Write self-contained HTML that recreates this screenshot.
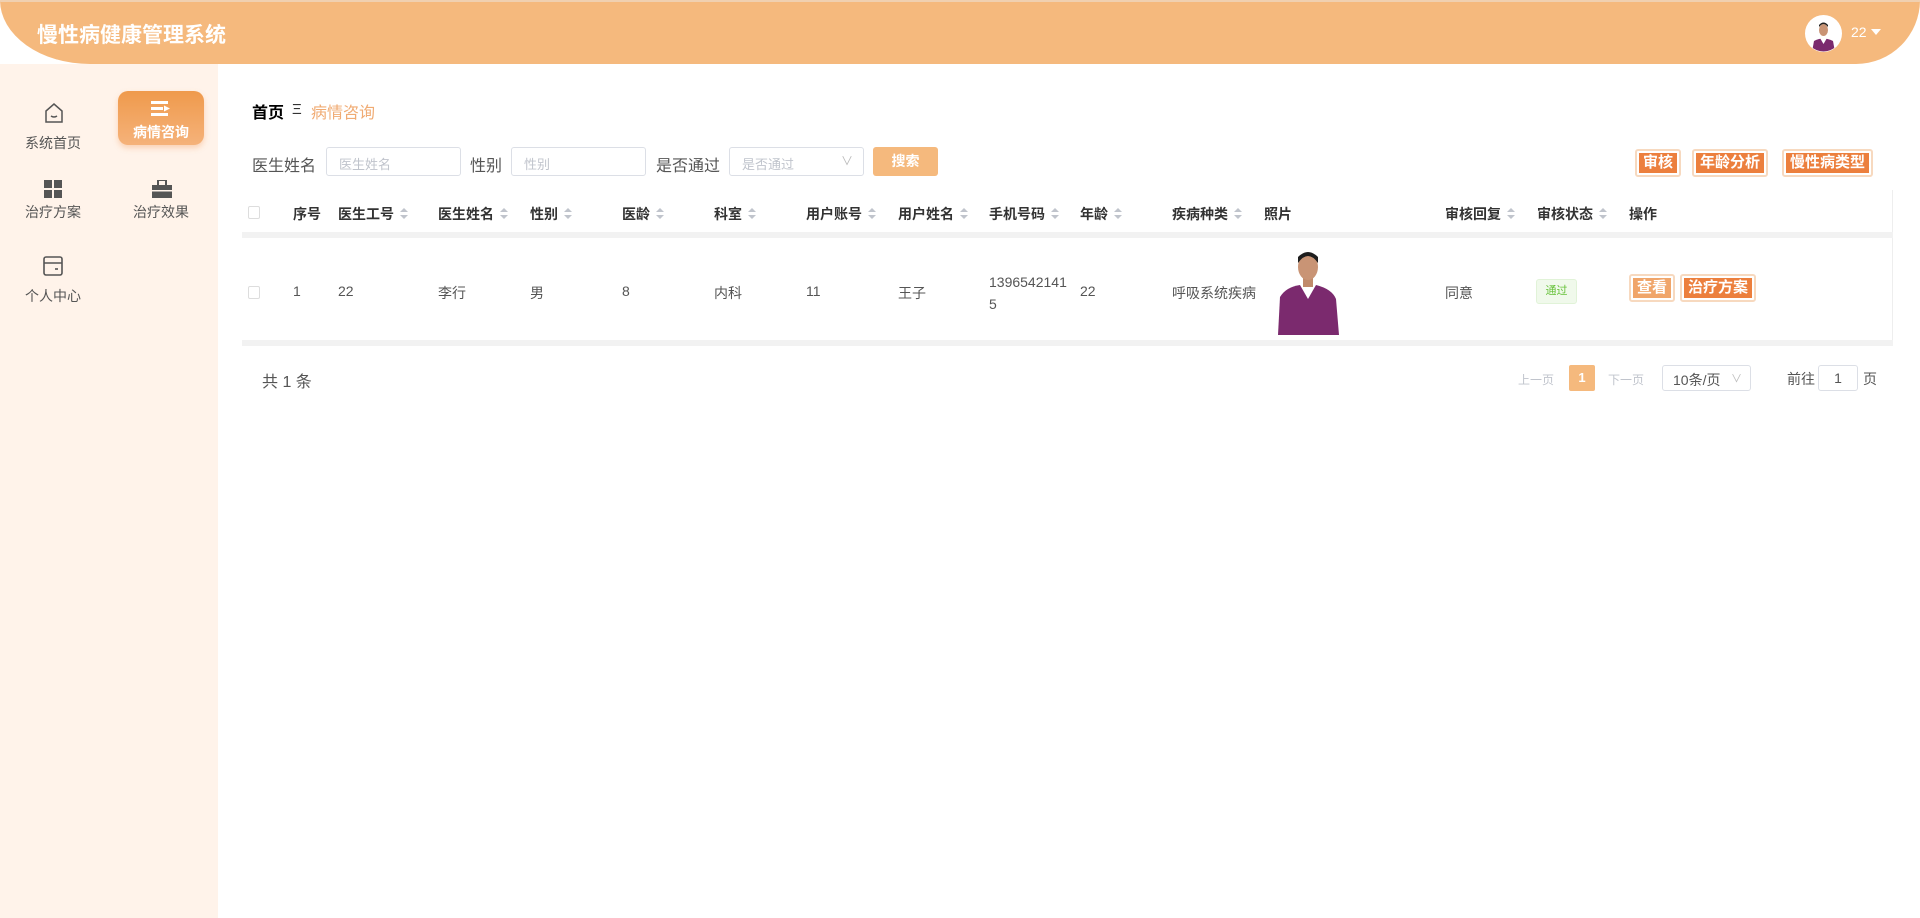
<!DOCTYPE html>
<html><head><meta charset="utf-8"><style>
*{margin:0;padding:0;box-sizing:border-box}
body{width:1920px;height:918px;overflow:hidden;background:#fff;font-family:"Liberation Sans","Noto Sans CJK SC",sans-serif;color:#333;position:relative}
.a{position:absolute;white-space:nowrap}
#hdr{left:0;top:0;width:1920px;height:64px;background:#f5b97d;border-radius:0 0 64px 90px / 0 0 64px 64px;border-top:2px solid #f0d0b0}
#side{left:0;top:64px;width:218px;height:854px;background:#fff3ea}
.mi{font-size:14px;color:#555;text-align:center;width:90px}
.lbl{font-size:16px;color:#555}
.inp{border:1px solid #dcdfe6;border-radius:3px;height:29px;font-size:13px;color:#c0c4cc;padding:6px 12px;background:#fff}
.th{font-size:14px;font-weight:bold;color:#333;top:204px}
.td{font-size:14px;color:#555;top:283px}
.sort{display:inline-block;width:8px;height:12px;margin-left:6px;vertical-align:-1px;position:relative}
.sort:before{content:"";position:absolute;left:0;top:0;border:4px solid transparent;border-bottom:4px solid #c0c4cc;border-top:0}
.sort:after{content:"";position:absolute;left:0;top:7px;border:4px solid transparent;border-top:4px solid #c0c4cc;border-bottom:0}
.ob{border:2px solid #f7d9bf;border-radius:3px;background:#fff;padding:2px}
.ob span{display:block;background:#ec7f3d;color:#fff;font-size:15px;font-weight:bold;line-height:20px;padding:0 4px}
</style></head><body>
<div class="a" id="hdr"></div>
<div class="a" style="left:37px;top:19px;font-size:21px;font-weight:bold;color:#fff">慢性病健康管理系统</div>
<svg class="a" style="left:1805px;top:15px" width="37" height="37" viewBox="0 0 37 37"><circle cx="18.5" cy="18.5" r="18.5" fill="#fff"/><clipPath id="c1"><circle cx="18.5" cy="18.5" r="18"/></clipPath><g clip-path="url(#c1)"><path d="M7 37 L9 26 Q18 21 28 26 L30 37Z" fill="#7b2a6e"/><path d="M15 23 L18.5 29 L22 23Z" fill="#fff"/><ellipse cx="18.5" cy="15" rx="4.5" ry="6" fill="#c99475"/><path d="M14 12 Q18.5 6 23 12 L23 10 Q18.5 5 14 10Z" fill="#222"/></g></svg>
<div class="a" style="left:1851px;top:24px;font-size:14px;color:#fff">22</div>
<div class="a" style="left:1871px;top:29px;border:5px solid transparent;border-top:6px solid #fff"></div>

<div class="a" id="side"></div>
<svg class="a" style="left:43px;top:102px" width="22" height="22" viewBox="0 0 22 22" fill="none" stroke="#555" stroke-width="1.5"><path d="M3 9 L11 2 L19 9 L19 20 L3 20Z"/><path d="M8 14 Q11 16 14 14"/></svg>
<div class="a mi" style="left:8px;top:133px">系统首页</div>
<div class="a" style="left:118px;top:91px;width:86px;height:54px;border-radius:10px;background:linear-gradient(#ef9a4c,#f5b27a);box-shadow:0 3px 6px rgba(240,150,80,.35)"></div>
<svg class="a" style="left:151px;top:100px" width="20" height="17" viewBox="0 0 20 17" fill="#fff"><rect x="0" y="1" width="17" height="3"/><rect x="0" y="7" width="12" height="3"/><path d="M13 5.5 L19 8.5 L13 11.5Z"/><rect x="0" y="13" width="17" height="3"/></svg>
<div class="a mi" style="left:116px;top:122px;color:#fff;font-weight:bold">病情咨询</div>
<svg class="a" style="left:44px;top:180px" width="18" height="18" viewBox="0 0 18 18" fill="#555"><rect x="0" y="0" width="8" height="8"/><rect x="10" y="0" width="8" height="8"/><rect x="0" y="10" width="8" height="8"/><rect x="10" y="10" width="8" height="8"/></svg>
<div class="a mi" style="left:8px;top:202px">治疗方案</div>
<svg class="a" style="left:152px;top:180px" width="20" height="18" viewBox="0 0 20 18" fill="#555"><rect x="0" y="5" width="20" height="13"/><rect x="6" y="0" width="8" height="6" fill="none" stroke="#555" stroke-width="2"/><rect x="0" y="10" width="20" height="1.5" fill="#fff3ea"/></svg>
<div class="a mi" style="left:116px;top:202px">治疗效果</div>
<svg class="a" style="left:43px;top:256px" width="20" height="20" viewBox="0 0 20 20" fill="none" stroke="#555" stroke-width="1.6"><rect x="1" y="1" width="18" height="18" rx="2"/><path d="M1 7 H19"/><path d="M12 13 H15"/></svg>
<div class="a mi" style="left:8px;top:286px">个人中心</div>

<div class="a" style="left:252px;top:99px;font-size:16px;font-weight:bold;color:#000">首页</div>
<div class="a" style="left:292px;top:101px;font-size:15px;color:#333;line-height:18px">Ξ</div>
<div class="a" style="left:311px;top:99px;font-size:16px;color:#f0ab73">病情咨询</div>

<div class="a lbl" style="left:252px;top:152px">医生姓名</div>
<div class="a inp" style="left:326px;top:147px;width:135px">医生姓名</div>
<div class="a lbl" style="left:470px;top:152px">性别</div>
<div class="a inp" style="left:511px;top:147px;width:135px">性别</div>
<div class="a lbl" style="left:656px;top:152px">是否通过</div>
<div class="a inp" style="left:729px;top:147px;width:135px">是否通过<span style="position:absolute;right:10px;top:4px;color:#bbb;font-size:12px">∨</span></div>
<div class="a" style="left:873px;top:147px;width:65px;height:29px;background:#f5b97d;border-radius:3px;color:#fff;font-size:14px;font-weight:bold;text-align:center;line-height:29px">搜索</div>

<div class="a ob" style="left:1635px;top:149px"><span>审核</span></div>
<div class="a ob" style="left:1692px;top:149px"><span>年龄分析</span></div>
<div class="a ob" style="left:1782px;top:149px"><span>慢性病类型</span></div>

<div class="a" style="left:242px;top:190px;width:1651px;height:155px;border-right:1px solid #eee"></div>
<div class="a" style="left:242px;top:232px;width:1651px;height:6px;background:#f2f2f2"></div>
<div class="a" style="left:242px;top:340px;width:1651px;height:6px;background:#f2f2f2"></div>
<div class="a" style="left:248px;top:206px;width:12px;height:13px;border:1px solid #ddd;border-radius:2px"></div>
<div class="a" style="left:248px;top:286px;width:12px;height:13px;border:1px solid #ddd;border-radius:2px"></div>
<div class="a th" style="left:293px">序号</div>
<div class="a th" style="left:338px">医生工号<i class="sort"></i></div>
<div class="a th" style="left:438px">医生姓名<i class="sort"></i></div>
<div class="a th" style="left:530px">性别<i class="sort"></i></div>
<div class="a th" style="left:622px">医龄<i class="sort"></i></div>
<div class="a th" style="left:714px">科室<i class="sort"></i></div>
<div class="a th" style="left:806px">用户账号<i class="sort"></i></div>
<div class="a th" style="left:898px">用户姓名<i class="sort"></i></div>
<div class="a th" style="left:989px">手机号码<i class="sort"></i></div>
<div class="a th" style="left:1080px">年龄<i class="sort"></i></div>
<div class="a th" style="left:1172px">疾病种类<i class="sort"></i></div>
<div class="a th" style="left:1264px">照片</div>
<div class="a th" style="left:1445px">审核回复<i class="sort"></i></div>
<div class="a th" style="left:1537px">审核状态<i class="sort"></i></div>
<div class="a th" style="left:1629px">操作</div>

<div class="a td" style="left:293px">1</div>
<div class="a td" style="left:338px">22</div>
<div class="a td" style="left:438px">李行</div>
<div class="a td" style="left:530px">男</div>
<div class="a td" style="left:622px">8</div>
<div class="a td" style="left:714px">内科</div>
<div class="a td" style="left:806px">11</div>
<div class="a td" style="left:898px">王子</div>
<div class="a td" style="left:989px;top:271px;line-height:22px">1396542141<br>5</div>
<div class="a td" style="left:1080px">22</div>
<div class="a td" style="left:1172px">呼吸系统疾病</div>
<svg class="a" style="left:1276px;top:247px" width="64" height="88" viewBox="0 0 64 88"><path d="M2 88 L4 50 Q10 40 24 38 L40 38 Q56 42 60 52 L63 88Z" fill="#7b2a6e"/><path d="M24 38 L32 52 L40 38Z" fill="#fff"/><rect x="27" y="28" width="10" height="12" fill="#c08a6a"/><ellipse cx="32" cy="20" rx="10" ry="13" fill="#c99475"/><path d="M22 16 Q32 2 42 16 L42 10 Q32 0 22 10Z" fill="#1e1e1e"/></svg>
<div class="a td" style="left:1445px">同意</div>
<div class="a" style="left:1536px;top:279px;width:41px;height:25px;border:1px solid #e1f3d8;background:#f0f9eb;color:#67c23a;font-size:11px;text-align:center;line-height:23px;border-radius:3px">通过</div>
<div class="a ob" style="left:1629px;top:274px"><span style="background:#f0a56a">查看</span></div>
<div class="a ob" style="left:1680px;top:274px"><span>治疗方案</span></div>

<div class="a" style="left:262px;top:368px;font-size:16px;color:#555">共 1 条</div>
<div class="a" style="left:1518px;top:371px;font-size:12px;color:#c0c4cc">上一页</div>
<div class="a" style="left:1569px;top:365px;width:26px;height:26px;background:#f5b97d;color:#fff;font-size:13px;font-weight:bold;text-align:center;line-height:26px;border-radius:2px">1</div>
<div class="a" style="left:1608px;top:371px;font-size:12px;color:#c0c4cc">下一页</div>
<div class="a" style="left:1662px;top:365px;width:89px;height:26px;border:1px solid #dcdfe6;border-radius:3px;font-size:14px;color:#555;padding:4px 10px">10条/页<span style="position:absolute;right:8px;top:4px;color:#bbb;font-size:11px">∨</span></div>
<div class="a" style="left:1787px;top:369px;font-size:14px;color:#555">前往</div>
<div class="a" style="left:1818px;top:365px;width:40px;height:26px;border:1px solid #dcdfe6;border-radius:3px;font-size:14px;color:#555;text-align:center;line-height:24px">1</div>
<div class="a" style="left:1863px;top:369px;font-size:14px;color:#555">页</div>
</body></html>
